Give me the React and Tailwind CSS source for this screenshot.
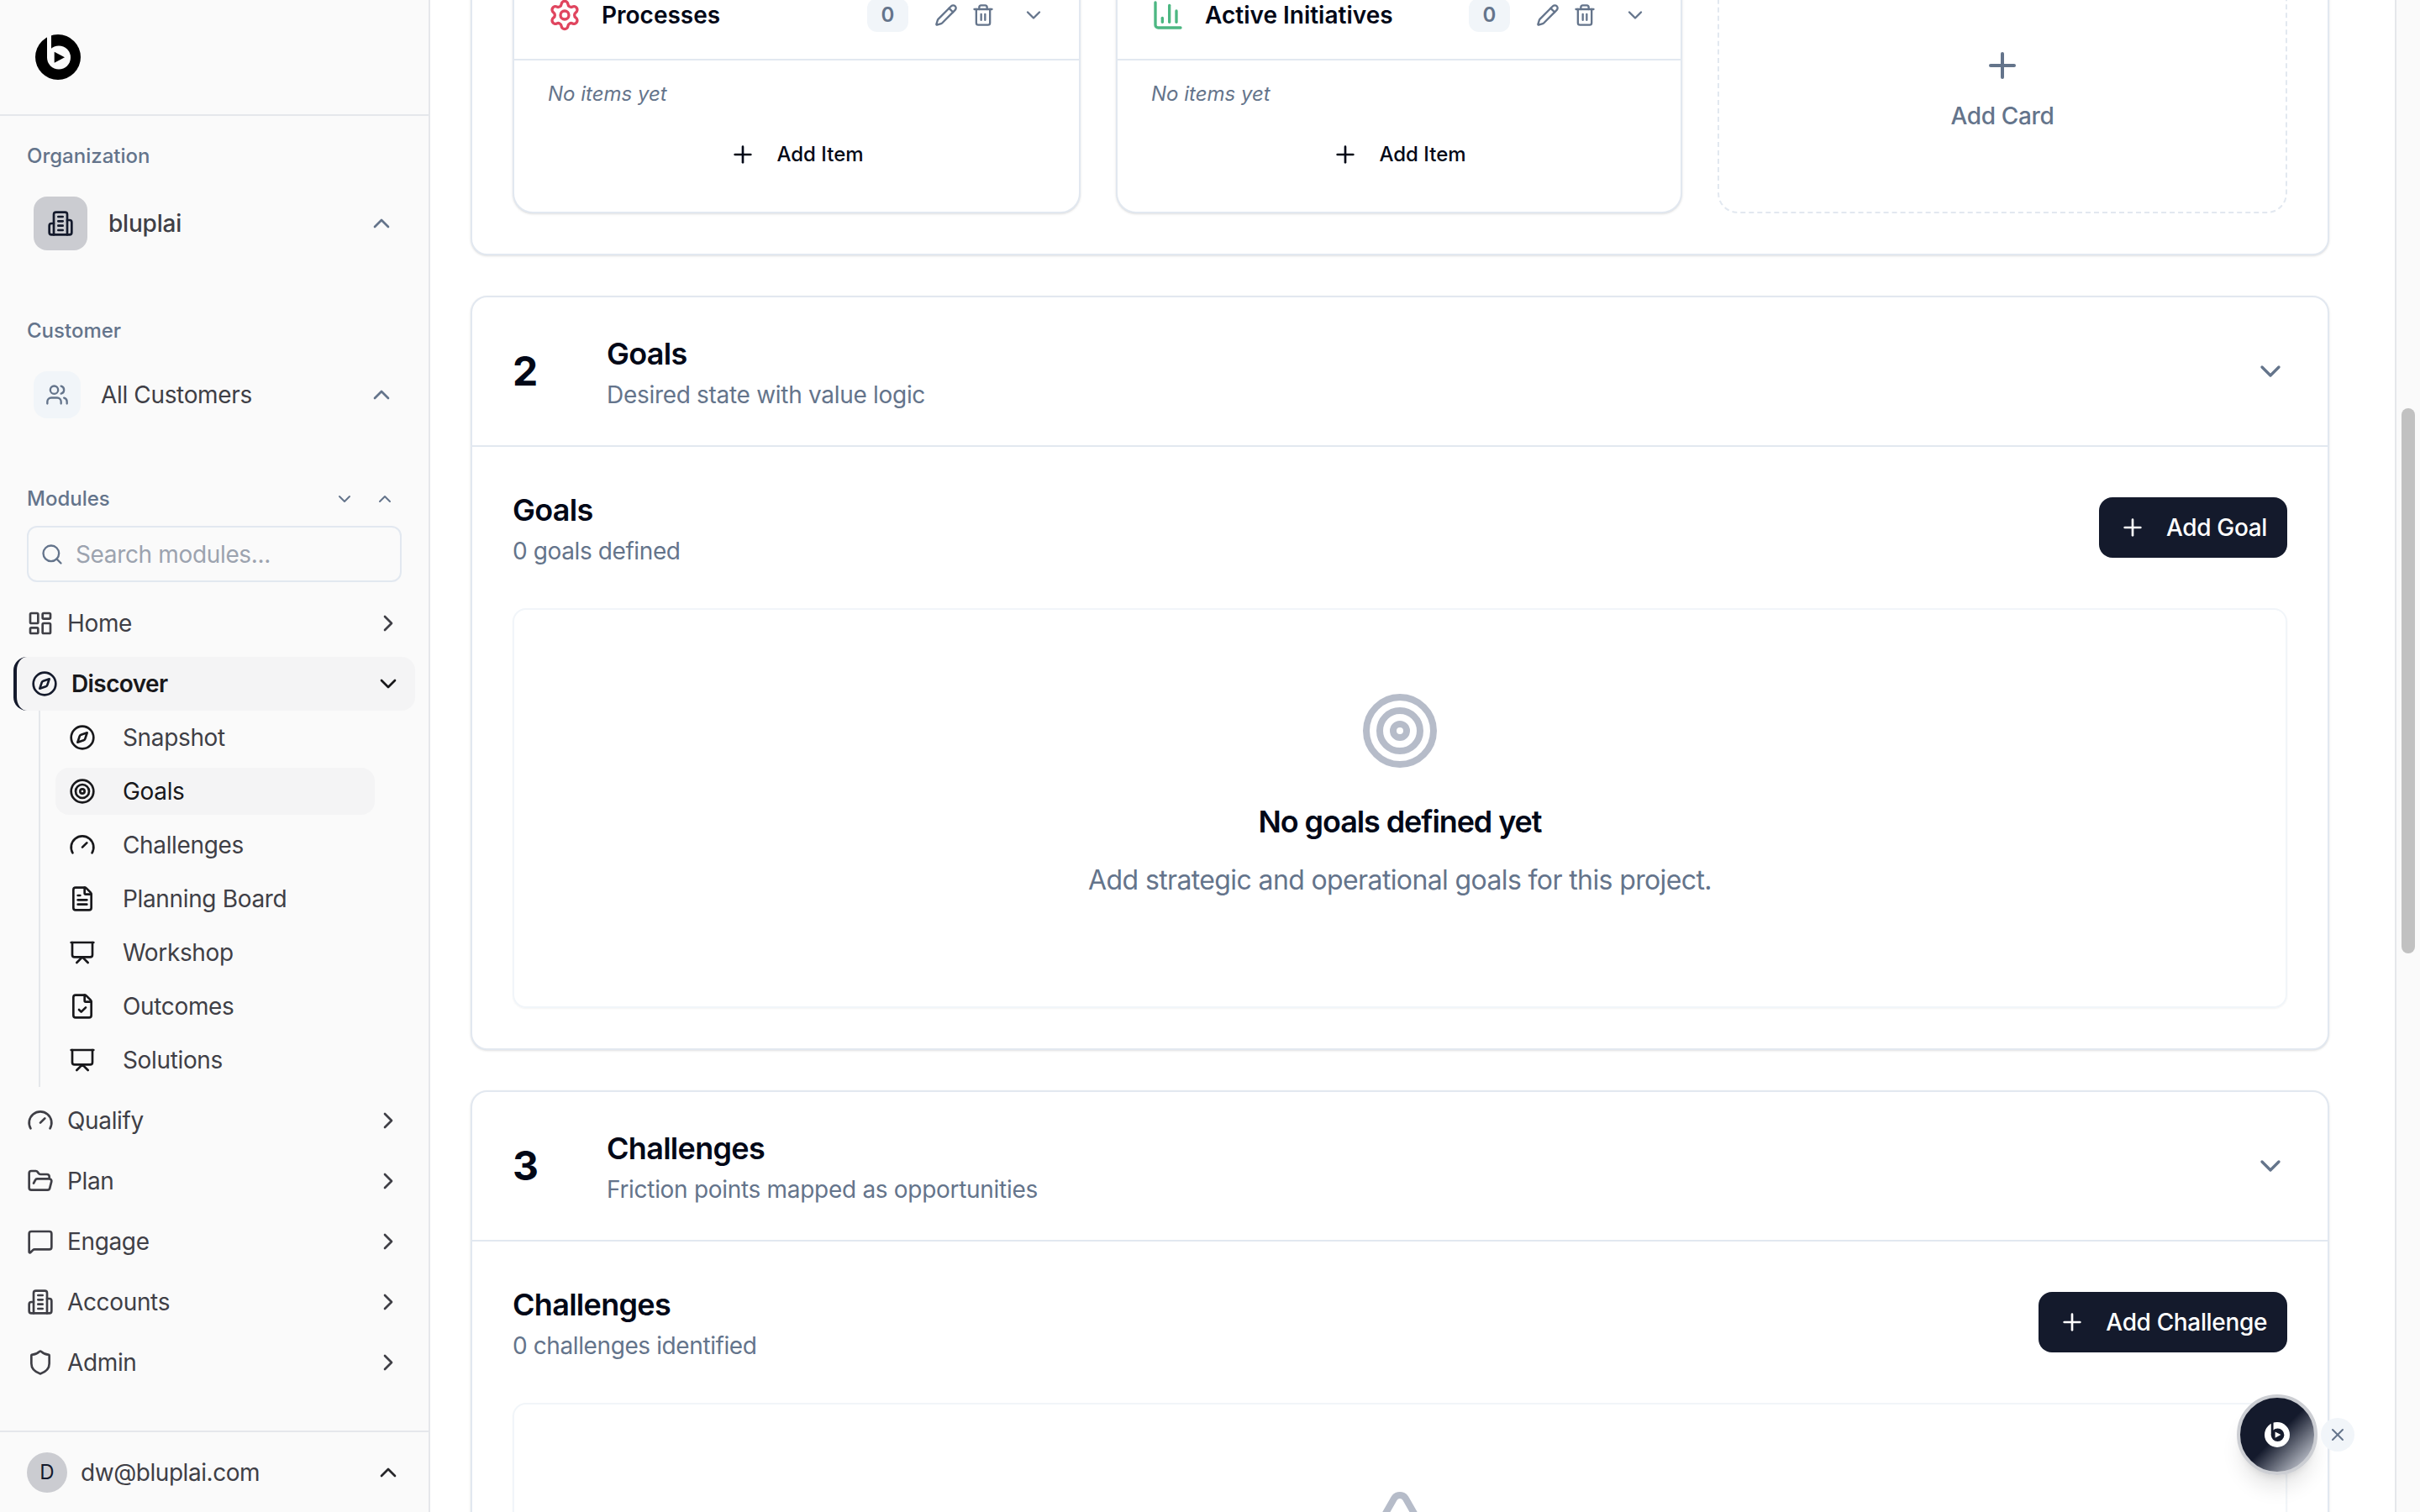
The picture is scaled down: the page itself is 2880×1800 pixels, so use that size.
import {
  ChartColumn,
  ChevronDown,
  ChevronRight,
  ChevronUp,
  Compass,
  FileCheck,
  FileText,
  FolderOpen,
  Gauge,
  LayoutDashboard,
  MessageSquare,
  Pencil,
  Plus,
  Presentation,
  Search,
  Settings,
  Shield,
  Target,
  Trash2,
  TriangleAlert,
  Users,
  X,
} from 'lucide-react';

// the icon in the screenshot is the older lucide Building2, without the door
function BuildingIcon({ size = 32, className }) {
  return (
    <svg
      width={size}
      height={size}
      viewBox="0 0 24 24"
      fill="none"
      stroke="currentColor"
      strokeWidth="2"
      strokeLinecap="round"
      strokeLinejoin="round"
      className={className}
      aria-hidden="true"
    >
      <path d="M6 22V4a2 2 0 0 1 2-2h8a2 2 0 0 1 2 2v18Z" />
      <path d="M6 12H4a2 2 0 0 0-2 2v6a2 2 0 0 0 2 2h2" />
      <path d="M18 9h2a2 2 0 0 1 2 2v9a2 2 0 0 1-2 2h-2" />
      <path d="M10 6h4" />
      <path d="M10 10h4" />
      <path d="M10 14h4" />
      <path d="M10 18h4" />
    </svg>
  );
}

const SUB_ITEMS = [
  { icon: Compass, label: 'Snapshot' },
  { icon: Target, label: 'Goals', active: true },
  { icon: Gauge, label: 'Challenges' },
  { icon: FileText, label: 'Planning Board' },
  { icon: Presentation, label: 'Workshop' },
  { icon: FileCheck, label: 'Outcomes' },
  { icon: Presentation, label: 'Solutions' },
];

const LOWER_ITEMS = [
  { icon: Gauge, label: 'Qualify' },
  { icon: FolderOpen, label: 'Plan' },
  { icon: MessageSquare, label: 'Engage' },
  { icon: BuildingIcon, label: 'Accounts' },
  { icon: Shield, label: 'Admin' },
];

function Logo({ size, disc, cut }) {
  return (
    <svg width={size} height={size} viewBox="0 0 54 54" aria-hidden="true">
      <circle cx="27" cy="27" r="27" fill={disc} />
      <rect x="14" y="-1" width="5" height="28" fill={cut} />
      <circle cx="28" cy="27.5" r="14" fill={cut} />
      <path d="M22.7 20.7 35 27.2 22.7 33.8Z" fill={disc} />
    </svg>
  );
}

function NavItem({ icon: Icon, label }) {
  return (
    <div className="flex h-16 items-center gap-4 rounded-2xl px-4 text-[#3f3f46]">
      <Icon size={32} className="shrink-0" />
      <span className="flex-1 text-[28px] leading-10 tracking-[-0.35px]">{label}</span>
      <ChevronRight size={32} />
    </div>
  );
}

function Sidebar() {
  return (
    <aside className="flex h-screen w-[512px] shrink-0 flex-col border-r-2 border-[#e5e7eb] bg-[#fafafa]">
      <div className="flex h-[138px] shrink-0 items-center border-b-2 border-[#e5e7eb] pl-[42px]">
        <Logo size={54} disc="#000000" cut="#fafafa" />
      </div>

      <div className="px-8 pt-8">
        <div className="text-2xl font-medium text-[#64748b]">Organization</div>
        <div className="mx-2 mt-8 flex h-16 items-center gap-[25px]">
          <span className="flex size-16 items-center justify-center rounded-2xl bg-[#cbccd1] text-[#141a2c]">
            <BuildingIcon size={32} />
          </span>
          <span className="flex-1 text-[28px] font-medium tracking-[-0.2px] text-[#3f3f46]">bluplai</span>
          <ChevronUp size={32} className="text-[#64748b]" />
        </div>

        <div className="mt-20 text-2xl font-medium text-[#64748b]">Customer</div>
        <div className="mx-2 mt-8 flex h-14 items-center gap-6">
          <span className="flex size-14 items-center justify-center rounded-2xl bg-[#f1f5f9] text-[#64748b]">
            <Users size={28} />
          </span>
          <span className="flex-1 text-[28px] tracking-[-0.35px] text-[#3f3f46]">All Customers</span>
          <ChevronUp size={32} className="text-[#64748b]" />
        </div>

        <div className="mt-20 flex h-8 items-center pr-2 text-[#64748b]">
          <span className="flex-1 text-2xl font-medium">Modules</span>
          <ChevronDown size={24} />
          <ChevronUp size={24} className="ml-6" />
        </div>
        <div className="mt-4 flex h-[67px] items-center gap-[14px] rounded-xl border-2 border-[#e2e8f0] pl-[14px]">
          <Search size={28} className="shrink-0 text-[#64748b]" />
          <input
            readOnly
            placeholder="Search modules..."
            className="w-full bg-transparent text-[28px] tracking-[-0.35px] outline-none placeholder:text-[#9ca3af]"
          />
        </div>
      </div>

      <nav className="mt-[17px] flex flex-col gap-2 px-4">
        <NavItem icon={LayoutDashboard} label="Home" />
        <div>
          <div className="flex h-16 items-center gap-4 rounded-2xl border-l-4 border-[#141a2c] bg-[#f4f4f5] pl-[17px] pr-4 text-[#18181b]">
            <Compass size={32} className="shrink-0 text-[#141a2c]" />
            <span className="flex-1 text-[28px] font-semibold leading-10 tracking-[-0.6px]">Discover</span>
            <ChevronDown size={32} />
          </div>
          <div className="ml-[30px] flex flex-col gap-2 border-l-2 border-[#e5e7eb] py-1 pl-[18px]">
            {SUB_ITEMS.map(({ icon: Icon, label, active }) => (
              <div
                key={label}
                className={`flex h-14 w-[380px] items-center gap-8 rounded-2xl pl-4 text-[28px] tracking-[-0.35px] ${
                  active ? 'bg-[#f4f4f5] text-[#18181b]' : 'text-[#3f3f46]'
                }`}
              >
                <Icon size={32} className="shrink-0 text-[#18181b]" />
                <span>{label}</span>
              </div>
            ))}
          </div>
        </div>
        {LOWER_ITEMS.map((item) => (
          <NavItem key={item.label} {...item} />
        ))}
      </nav>

      <div className="mt-auto flex h-[97px] items-center gap-4 border-t-2 border-[#e5e7eb] px-8">
        <span className="flex size-12 items-center justify-center rounded-full bg-[#cbccd1] text-2xl text-[#141a2c]">D</span>
        <span className="flex-1 text-[28px] tracking-[-0.45px] text-[#3f3f46]">dw@bluplai.com</span>
        <ChevronUp size={32} className="text-[#27272a]" />
      </div>
    </aside>
  );
}

function ItemCard({ icon: Icon, iconClass, title }) {
  return (
    <div className="rounded-3xl border-2 border-[#e2e8f0] bg-white shadow-sm">
      <div className="flex h-[104px] items-center border-b-2 border-[#e2e8f0] px-10 pb-[2px]">
        <Icon size={40} className={`shrink-0 ${iconClass}`} />
        <span className="ml-6 flex-1 text-[28px] font-semibold text-[#020817]">{title}</span>
        <span className="flex h-10 w-[49px] items-center justify-center rounded-xl bg-[#f1f5f9] text-2xl font-semibold text-[#64748b]">0</span>
        <Pencil size={28} className="ml-[31px] text-[#64748b]" />
        <Trash2 size={28} className="ml-4 text-[#64748b]" />
        <ChevronDown size={28} className="ml-8 text-[#64748b]" />
      </div>
      <div className="px-10 pb-9 pt-6">
        <div className="text-2xl italic leading-8 text-[#64748b]">No items yet</div>
        <div className="mt-6 flex h-16 items-center justify-center gap-6 text-2xl font-medium text-[#020817]">
          <Plus size={32} />
          <span>Add Item</span>
        </div>
      </div>
    </div>
  );
}

function SectionCard({ number, title, subtitle, heading, count, button, emptyIcon: EmptyIcon, emptyTitle, emptyText }) {
  return (
    <section className="rounded-[20px] border-2 border-[#e2e8f0] bg-white shadow-sm">
      <div className="flex items-center border-b-2 border-[#e2e8f0] px-12 py-10">
        <span className="w-[112px] text-5xl font-bold text-[#020817]">{number}</span>
        <div className="flex-1">
          <h2 className="mb-[2px] text-4xl font-semibold leading-[54px] tracking-[-0.7px] text-[#020817]">{title}</h2>
          <p className="text-[28px] leading-10 tracking-[-0.3px] text-[#64748b]">{subtitle}</p>
        </div>
        <ChevronDown size={40} className="text-[#64748b]" />
      </div>
      <div className="p-12">
        <div className="flex items-center justify-between">
          <div>
            <h3 className="mb-[2px] text-4xl font-semibold leading-[54px] tracking-[-0.7px] text-[#020817]">{heading}</h3>
            <p className="text-[28px] leading-10 tracking-[-0.4px] text-[#64748b]">{count}</p>
          </div>
          <button type="button" className="flex h-[72px] items-center gap-6 rounded-2xl bg-[#141a2c] px-6 text-[28px] font-medium tracking-[-0.35px] text-white">
            <Plus size={32} />
            {button}
          </button>
        </div>
        <div className="mt-12 flex h-[476px] flex-col items-center rounded-2xl border-2 border-[#f1f5f9] pt-24 shadow-xs">
          <EmptyIcon size={96} className="text-[#b6bcc9]" />
          {emptyTitle && (
            <div className="mt-8 text-4xl font-semibold leading-14 tracking-[-1.1px] text-[#020817]">{emptyTitle}</div>
          )}
          {emptyText && (
            <div className="mt-[18px] text-[32px] leading-12 tracking-[-0.62px] text-[#64748b]">{emptyText}</div>
          )}
        </div>
      </div>
    </section>
  );
}

export default function App() {
  return (
    <div className="relative flex h-screen overflow-hidden bg-white font-['Inter',sans-serif]">
      <Sidebar />

      <main className="min-w-0 flex-1 overflow-hidden">
        <div className="mt-[-84px] flex flex-col gap-12 pl-12 pr-[78px]">
          <div className="rounded-[20px] border-2 border-[#e2e8f0] bg-white p-12 shadow-sm">
            <div className="grid grid-cols-[676px_674px_1fr] gap-[42px]">
              <ItemCard icon={Settings} iconClass="text-[#e0455f]" title="Processes" />
              <ItemCard icon={ChartColumn} iconClass="text-[#4cb782]" title="Active Initiatives" />
              <div className="flex flex-col items-center justify-center gap-4 rounded-3xl border-2 border-dashed border-[#e2e8f0] pb-2 text-[#64748b]">
                <Plus size={48} />
                <span className="text-[28px] font-medium leading-10 tracking-[-0.35px]">Add Card</span>
              </div>
            </div>
          </div>

          <SectionCard
            number="2"
            title="Goals"
            subtitle="Desired state with value logic"
            heading="Goals"
            count="0 goals defined"
            button="Add Goal"
            emptyIcon={Target}
            emptyTitle="No goals defined yet"
            emptyText="Add strategic and operational goals for this project."
          />
          <SectionCard
            number="3"
            title="Challenges"
            subtitle="Friction points mapped as opportunities"
            heading="Challenges"
            count="0 challenges identified"
            button="Add Challenge"
            emptyIcon={TriangleAlert}
          />
        </div>
      </main>

      {/* scrollbar */}
      <div className="h-screen w-[30px] shrink-0 border-l-2 border-[#e5e7eb] bg-[#fafafa]">
        <div className="ml-[6px] mt-[486px] h-[649px] w-4 rounded-full bg-[#c1c1c1]" />
      </div>

      {/* floating assistant */}
      <div className="absolute left-[2662px] top-[1660px] flex size-24 items-center justify-center rounded-full border-4 border-[#ccced3] bg-[linear-gradient(135deg,#141a2c_50%,#b4b8c2_88%)] shadow-xl">
        <Logo size={30} disc="#ffffff" cut="#141a2c" />
      </div>
      <div className="absolute left-[2762px] top-[1688px] flex size-10 items-center justify-center rounded-full bg-[#f1f5f9] text-[#64748b]">
        <X size={24} />
      </div>
    </div>
  );
}
